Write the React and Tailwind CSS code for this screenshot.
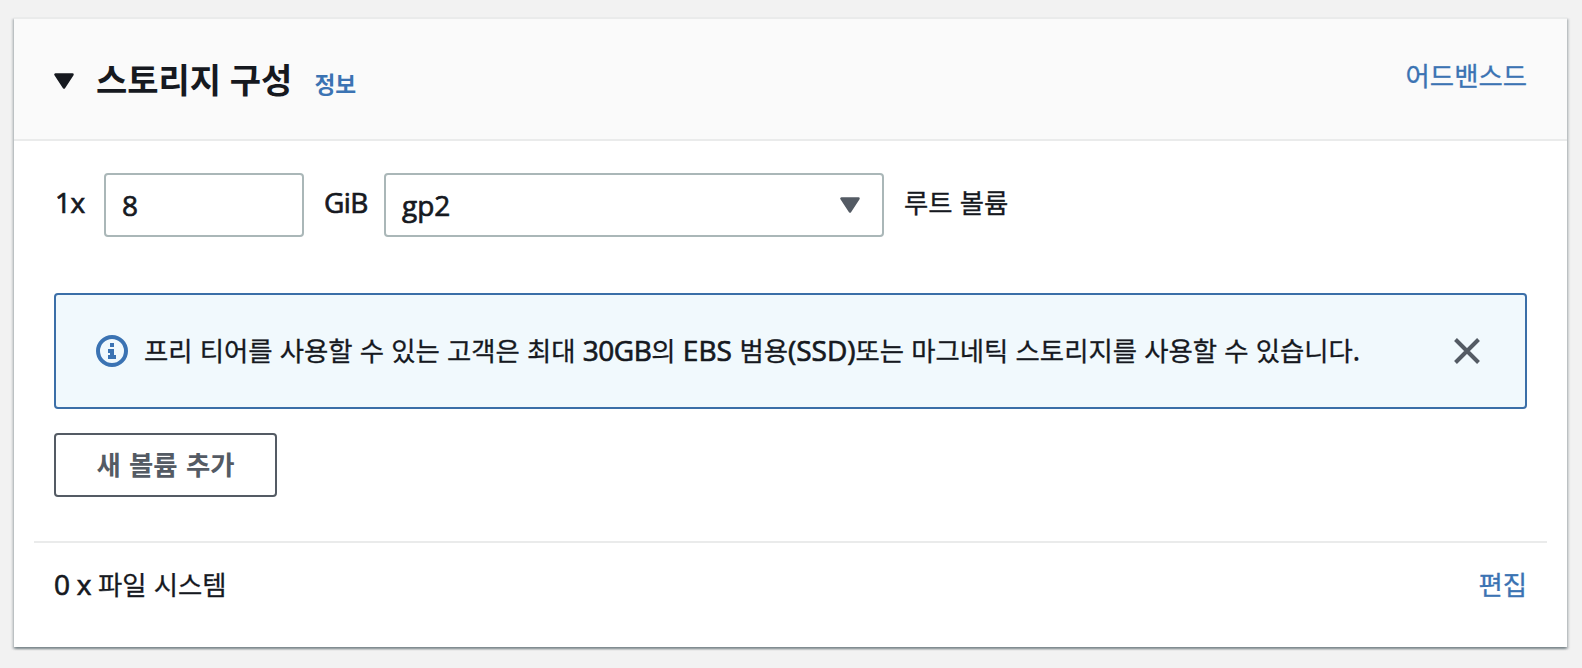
import { useState } from "react";
import clsx from "clsx";

// Korean glyphs are set slightly smaller than the latin ones so both line up
function Ko({ children, className }) {
  return (
    <span
      lang="ko"
      className={clsx(
        "font-['Noto_Sans_CJK_KR','Noto_Sans',sans-serif]",
        className || "text-[26.4px] [word-spacing:-0.2px] [-webkit-text-stroke:0.3px]"
      )}
    >
      {children}
    </span>
  );
}

function En({ children, className }) {
  return (
    <span
      className={clsx(
        "font-['Open_Sans','Noto_Sans',sans-serif] [-webkit-text-stroke:0.7px]",
        className
      )}
    >
      {children}
    </span>
  );
}

function Caret({ className }) {
  return (
    <svg viewBox="0 0 20 16" className={clsx("h-4 w-5 shrink-0", className)}>
      <path
        d="M1.5 1.5h17L10 14.5z"
        fill="currentColor"
        stroke="currentColor"
        strokeWidth="2.5"
        strokeLinejoin="round"
      />
    </svg>
  );
}

function InfoIcon() {
  return (
    <svg viewBox="0 0 32 32" className="h-8 w-8 shrink-0 text-[#3b73b3]">
      <circle cx="16" cy="16" r="14" fill="none" stroke="currentColor" strokeWidth="4" />
      <path d="M14 8h4v4h-4zM12 14h6v6h2v4h-8v-4h2v-2h-2z" fill="currentColor" />
    </svg>
  );
}

export default function App() {
  const [size, setSize] = useState("8");

  return (
    <div className="h-[668px] w-[1582px] overflow-hidden bg-[#f2f2f2] pt-[17px] pr-[15px] pl-[14px] text-[28px] text-[#16191f]">
      <section className="h-[630px] bg-white shadow-[0_2px_2px_0_rgba(0,28,36,0.3),2px_2px_2px_0_rgba(0,28,36,0.15),-2px_2px_2px_0_rgba(0,28,36,0.15)]">
        {/* Header */}
        <header className="flex h-[124px] items-center border-y-2 border-[#eaebeb] bg-[#fafafa] px-10">
          <Caret className="mt-1" />
          <h2 className="ml-[22px] flex items-baseline leading-none font-bold">
            <Ko className="text-[34px] [word-spacing:-0.8px]">스토리지 구성</Ko>
            <a href="#" className="ml-[22px] text-[#3b73b3]">
              <Ko className="text-[22.7px]">정보</Ko>
            </a>
          </h2>
          <a href="#" className="mb-2 ml-auto leading-none text-[#3b73b3]">
            <Ko>어드밴스드</Ko>
          </a>
        </header>

        {/* Root volume */}
        <div className="mt-8 flex h-16 items-center px-10 leading-none">
          <En className="w-[50px] pb-1.5 pl-px tracking-[-0.6px]">1x</En>
          <input
            value={size}
            onChange={(e) => setSize(e.target.value)}
            className="h-16 w-[200px] rounded-[4px] border-2 border-[#aab7b8] bg-white px-4 font-['Open_Sans',sans-serif] outline-none [-webkit-text-stroke:0.7px]"
          />
          <En className="ml-5 w-[60px] pb-1.5 tracking-[-0.6px]">GiB</En>
          <button
            type="button"
            className="flex h-16 w-[500px] items-center justify-between rounded-[4px] border-2 border-[#aab7b8] bg-white pr-[22px] pl-4"
          >
            <En>gp2</En>
            <Caret className="text-[#545b64]" />
          </button>
          <div className="ml-5 pb-1.5">
            <Ko>루트 볼륨</Ko>
          </div>
        </div>

        {/* Free tier notice */}
        <div className="mx-10 mt-14 flex h-[116px] items-center rounded-[4px] border-2 border-[#3b6fa8] bg-[#f1f9fd] pr-[45px] pl-10">
          <InfoIcon />
          <p className="ml-4 pb-0.5 leading-none whitespace-nowrap">
            <Ko>프리 티어를 사용할 수 있는 고객은 최대 </Ko>
            <En className="tracking-[-0.5px]">30GB</En>
            <Ko>의 </Ko>
            <En className="tracking-[0.1px]">EBS </En>
            <Ko>범용</Ko>
            <En>(SSD)</En>
            <Ko>또는 마그네틱 스토리지를 사용할 수 있습니다.</Ko>
          </p>
          <button type="button" aria-label="Close" className="ml-auto text-[#545b64]">
            <svg viewBox="0 0 26 26" className="h-[26px] w-[26px]">
              <path d="M1.5 1.5l23 23M24.5 1.5l-23 23" stroke="currentColor" strokeWidth="4" />
            </svg>
          </button>
        </div>

        <button
          type="button"
          className="mt-6 ml-10 flex h-16 w-[223px] items-center justify-center rounded-[4px] border-2 border-[#545b64] bg-white pb-0.5 leading-none font-bold text-[#545b64]"
        >
          <Ko className="text-[26.4px] [word-spacing:1px]">새 볼륨 추가</Ko>
        </button>

        {/* File systems */}
        <div className="mx-5 mt-11 flex h-[88px] items-center justify-between border-t-2 border-[#eaebeb] px-5 pb-1 leading-none">
          <p>
            <En className="tracking-[-0.3px]">0 x </En>
            <Ko>파일 시스템</Ko>
          </p>
          <a href="#" className="text-[#3b73b3]">
            <Ko>편집</Ko>
          </a>
        </div>
      </section>
    </div>
  );
}
